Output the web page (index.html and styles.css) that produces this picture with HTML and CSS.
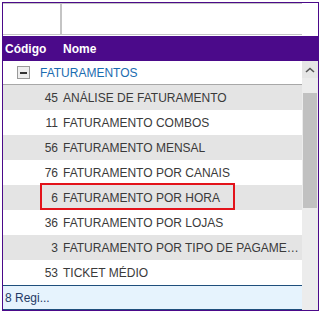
FILE: index.html
```html
<!DOCTYPE html>
<html>
<head>
<meta charset="utf-8">
<link rel="stylesheet" href="styles.css">
</head>
<body>
<div class="grid">
  <div class="filter-row">
    <div class="filter-cells">
      <div class="fcell code"></div>
      <div class="fcell name"></div>
    </div>
    <div class="filter-spacer"></div>
  </div>
  <div class="header">
    <div class="hcell code">Código</div>
    <div class="hcell name">Nome</div>
  </div>
  <div class="body">
    <div class="rows">
      <div class="group-row">
        <span class="toggle"><span class="minus"></span></span>
        <span class="group-title">FATURAMENTOS</span>
      </div>
      <div class="row alt"><span class="c">45</span><span class="n">ANÁLISE DE FATURAMENTO</span></div>
      <div class="row"><span class="c">11</span><span class="n">FATURAMENTO COMBOS</span></div>
      <div class="row alt"><span class="c">56</span><span class="n">FATURAMENTO MENSAL</span></div>
      <div class="row"><span class="c">76</span><span class="n">FATURAMENTO POR CANAIS</span></div>
      <div class="row alt"><span class="c">6</span><span class="n">FATURAMENTO POR HORA</span></div>
      <div class="row"><span class="c">36</span><span class="n">FATURAMENTO POR LOJAS</span></div>
      <div class="row alt"><span class="c">3</span><span class="n">FATURAMENTO POR TIPO DE PAGAMENTO</span></div>
      <div class="row"><span class="c">53</span><span class="n">TICKET MÉDIO</span></div>
      <div class="footer">8 Regi...</div>
      <div class="highlight"></div>
    </div>
    <div class="scrollbar">
      <div class="sb-btn">
        <svg width="10" height="6" viewBox="0 0 10 6"><polyline points="1,5 5,1.5 9,5" fill="none" stroke="#555" stroke-width="1.6"/></svg>
      </div>
      <div class="sb-track">
        <div class="sb-thumb"></div>
      </div>
    </div>
  </div>
</div>
</body>
</html>
```
FILE: styles.css
```css
html, body {
  margin: 0;
  padding: 0;
  background: #fff;
}
body {
  font-family: "Liberation Sans", Arial, sans-serif;
  font-size: 12px;
}
.grid {
  margin: 2px 0 0 2px;
  width: 315px;
  border: 1px solid #4b0a8a;
  display: flex;
  flex-direction: column;
  background: #fff;
}
.filter-row {
  display: flex;
  height: 33px;
}
.filter-cells {
  flex: 1;
  display: flex;
  height: 32px;
  box-sizing: border-box;
  border-top: 1px solid #c4c4c4;
  border-bottom: 1px solid #c4c4c4;
}
.fcell.code {
  width: 57px;
  border-right: 2px solid #c4c4c4;
}
.fcell.name {
  flex: 1;
}
.filter-spacer {
  width: 16px;
}
.header {
  height: 25px;
  background: #4b0a8a;
  color: #fff;
  font-weight: bold;
  display: flex;
  align-items: center;
}
.hcell.code {
  width: 58px;
  padding-left: 2px;
  box-sizing: border-box;
}
.hcell.name {
  padding-left: 2px;
}
.body {
  display: flex;
}
.rows {
  flex: 1;
  min-width: 0;
  position: relative;
}
.group-row {
  height: 24px;
  box-sizing: border-box;
  border-bottom: 1px solid #a8a8a8;
  display: flex;
  align-items: center;
  padding-left: 14px;
}
.toggle {
  width: 13px;
  height: 13px;
  box-sizing: border-box;
  border: 1px solid #9a9a9a;
  background: #eeeeee;
  display: flex;
  align-items: center;
  justify-content: center;
  margin-right: 10px;
}
.minus {
  width: 7px;
  height: 2px;
  background: #333;
}
.group-title {
  color: #1b6cb0;
}
.row {
  height: 25px;
  display: flex;
  align-items: center;
  color: #3a3a3a;
  white-space: nowrap;
}
.row.alt {
  background: #e4e4e4;
}
.row .c {
  width: 55px;
  text-align: right;
  flex: none;
}
.row .n {
  padding-left: 5px;
  overflow: hidden;
  text-overflow: ellipsis;
  flex: 1;
  min-width: 0;
  padding-right: 3px;
}
.footer {
  height: 25px;
  box-sizing: border-box;
  border-top: 1px solid #1f4f7c;
  border-bottom: 1px solid #1f4f7c;
  background: #e6f3fd;
  color: #1f3a66;
  display: flex;
  align-items: center;
  padding-left: 2px;
}
.highlight {
  position: absolute;
  left: 37px;
  top: 122px;
  width: 195px;
  height: 27px;
  box-sizing: border-box;
  border: 2px solid #e3131b;
}
.scrollbar {
  width: 16px;
  flex: none;
  background: #ececec;
  display: flex;
  flex-direction: column;
}
.sb-btn {
  height: 17px;
  background: #e6e6e6;
  display: flex;
  align-items: center;
  justify-content: center;
}
.sb-track {
  flex: 1;
  padding-top: 15px;
}
.sb-thumb {
  margin: 0 1px;
  height: 115px;
  background: #c1c1c1;
}
```
